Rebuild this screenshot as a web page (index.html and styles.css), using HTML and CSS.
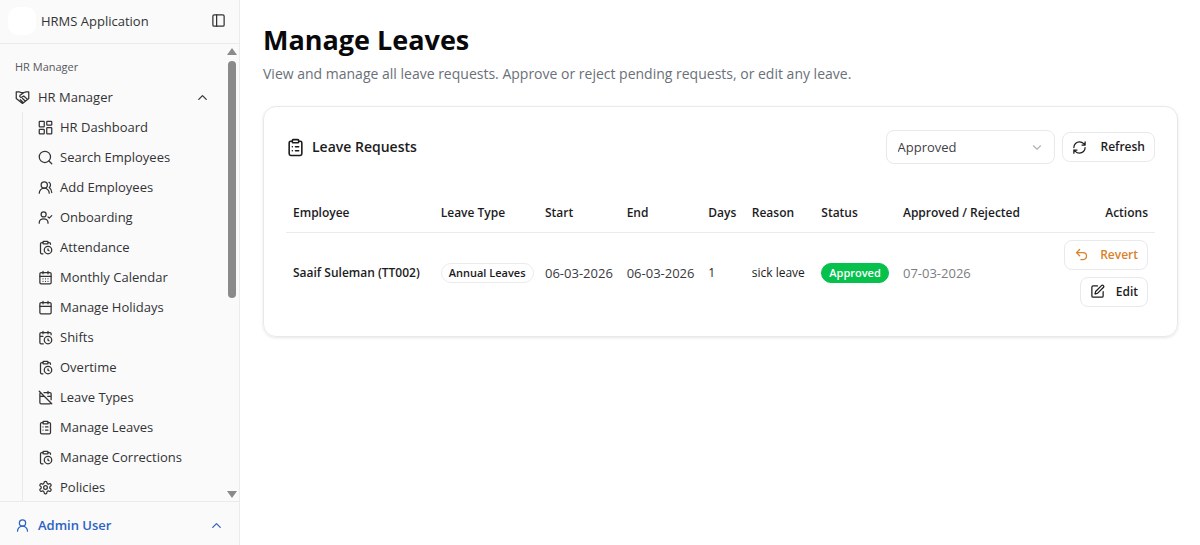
FILE: index.html
```html
<!DOCTYPE html>
<html lang="en">
<head>
<meta charset="utf-8">
<meta name="viewport" content="width=device-width, initial-scale=1">
<title>Manage Leaves</title>
<link rel="stylesheet" href="styles.css">
</head>
<body>
<svg class="sprite" aria-hidden="true">
  <symbol id="i-clipclock" viewBox="0 0 24 24"><path d="M16 14v2.2l1.6 1M16 4h2a2 2 0 0 1 2 2v.832M8 4H6a2 2 0 0 0-2 2v14a2 2 0 0 0 2 2h2"/><circle cx="16" cy="16" r="6"/><rect x="8" y="2" width="8" height="4" rx="1"/></symbol>
  <symbol id="i-cliplist" viewBox="0 0 24 24"><rect x="8" y="2" width="8" height="4" rx="1"/><path d="M16 4h2a2 2 0 0 1 2 2v14a2 2 0 0 1-2 2H6a2 2 0 0 1-2-2V6a2 2 0 0 1 2-2h2M12 11h4M12 16h4M8 11h.01M8 16h.01"/></symbol>
</svg>
<div class="app">
  <aside class="sidebar">
    <header class="brand">
      <span class="logo"></span>
      <span class="brand-name">HRMS Application</span>
      <button class="plain" type="button" aria-label="Toggle sidebar"><svg class="icon" viewBox="0 0 24 24"><rect x="3" y="3" width="18" height="18" rx="2"/><path d="M9 3v18"/></svg></button>
    </header>
    <div class="scroll">
      <nav class="nav">
        <p class="group-label">HR Manager</p>
        <button class="group" type="button" aria-expanded="true">
          <svg class="icon" viewBox="0 0 24 24"><path d="M2 3h4.500l3 1h5l3-1H22v10.500L12 21.500 2 13.500zM14 4.500L8 8.500a2 2 0 0 0 2.500 3L14 9.500l6 5.500M12 13.500l4.500 4M8.500 15.500l4 4"/></svg>
          <span>HR Manager</span>
          <svg class="icon chev" viewBox="0 0 24 24"><path d="m18 15-6-6-6 6"/></svg>
        </button>
        <ul class="menu">
          <li><a href="#"><svg class="icon" viewBox="0 0 24 24"><rect x="2" y="2" width="8" height="9" rx="1"/><rect x="14" y="2" width="8" height="6" rx="1"/><rect x="14" y="12" width="8" height="10" rx="1"/><rect x="2" y="15" width="8" height="7" rx="1"/></svg>HR Dashboard</a></li>
          <li><a href="#"><svg class="icon" viewBox="0 0 24 24"><circle cx="11" cy="11" r="9"/><path d="m22 22-4.500-4.500"/></svg>Search Employees</a></li>
          <li><a href="#"><svg class="icon" viewBox="0 0 24 24"><path d="M18 21a8 8 0 0 0-16 0M22 20c0-3.370-2-6.500-4-8a5 5 0 0 0-.45-8.300"/><circle cx="10" cy="8" r="5"/></svg>Add Employees</a></li>
          <li><a href="#"><svg class="icon" viewBox="0 0 24 24"><path d="M2 21v-1a7 6 0 0 1 14 0v1M16 11l2 2 4-4"/><circle cx="9" cy="7" r="4"/></svg>Onboarding</a></li>
          <li><a href="#"><svg class="icon" viewBox="0 0 24 24"><use href="#i-clipclock"/></svg>Attendance</a></li>
          <li><a href="#"><svg class="icon" viewBox="0 0 24 24"><rect x="3" y="4" width="18" height="18" rx="2"/><path d="M8 2v4M16 2v4M3 10h18M8 14h.01M12 14h.01M16 14h.01M8 18h.01M12 18h.01M16 18h.01"/></svg>Monthly Calendar</a></li>
          <li><a href="#"><svg class="icon" viewBox="0 0 24 24"><rect x="3" y="4" width="18" height="18" rx="2"/><path d="M8 2v4M16 2v4M3 10h18"/></svg>Manage Holidays</a></li>
          <li><a href="#"><svg class="icon" viewBox="0 0 24 24"><path d="M16 14v2.200l1.600 1M16 2v4M21 7.500V6a2 2 0 0 0-2-2H5a2 2 0 0 0-2 2v14a2 2 0 0 0 2 2h3.500M3 10h5M8 2v4"/><circle cx="16" cy="16" r="6"/></svg>Shifts</a></li>
          <li><a href="#"><svg class="icon" viewBox="0 0 24 24"><use href="#i-clipclock"/></svg>Overtime</a></li>
          <li><a href="#"><svg class="icon" viewBox="0 0 24 24"><path d="M4.200 4.200A2 2 0 0 0 3 6v14a2 2 0 0 0 2 2h14a2 2 0 0 0 1.820-1.180M21 15.500V6a2 2 0 0 0-2-2H9.500M16 2v4M3 10h7M21 10h-5.500M2 2l20 20"/></svg>Leave Types</a></li>
          <li><a href="#"><svg class="icon" viewBox="0 0 24 24"><use href="#i-cliplist"/></svg>Manage Leaves</a></li>
          <li><a href="#"><svg class="icon" viewBox="0 0 24 24"><use href="#i-clipclock"/></svg>Manage Corrections</a></li>
          <li><a href="#"><svg class="icon" viewBox="0 0 24 24"><path d="M12.220 2h-.44a2 2 0 0 0-2 2v.18a2 2 0 0 1-1 1.730l-.43.25a2 2 0 0 1-2 0l-.15-.08a2 2 0 0 0-2.730.73l-.22.38a2 2 0 0 0 .73 2.730l.15.1a2 2 0 0 1 1 1.720v.51a2 2 0 0 1-1 1.740l-.15.09a2 2 0 0 0-.73 2.730l.22.38a2 2 0 0 0 2.730.73l.15-.08a2 2 0 0 1 2 0l.43.25a2 2 0 0 1 1 1.730V20a2 2 0 0 0 2 2h.44a2 2 0 0 0 2-2v-.18a2 2 0 0 1 1-1.730l.43-.25a2 2 0 0 1 2 0l.15.08a2 2 0 0 0 2.730-.73l.22-.39a2 2 0 0 0-.73-2.730l-.15-.08a2 2 0 0 1-1-1.740v-.5a2 2 0 0 1 1-1.740l.15-.09a2 2 0 0 0 .73-2.730l-.22-.38a2 2 0 0 0-2.730-.73l-.15.08a2 2 0 0 1-2 0l-.43-.25a2 2 0 0 1-1-1.730V4a2 2 0 0 0-2-2z"/><circle cx="12" cy="12" r="3"/></svg>Policies</a></li>
        </ul>
      </nav>
      <div class="track" aria-hidden="true">
        <span class="arrow up"></span>
        <span class="rail"><span class="thumb"></span></span>
        <span class="arrow down"></span>
      </div>
    </div>
    <button class="account" type="button">
      <svg class="icon" viewBox="0 0 24 24"><circle cx="12" cy="8" r="5"/><path d="M20 21a8 8 0 0 0-16 0"/></svg>
      <span>Admin User</span>
      <svg class="icon chev" viewBox="0 0 24 24"><path d="m18 15-6-6-6 6"/></svg>
    </button>
  </aside>
  <main class="main">
    <h1>Manage Leaves</h1>
    <p class="lead">View and manage all leave requests. Approve or reject pending requests, or edit any leave.</p>
    <section class="card">
      <header class="card-head">
        <svg class="icon large" viewBox="0 0 24 24"><use href="#i-cliplist"/></svg>
        <h2>Leave Requests</h2>
        <div class="filter">
          <select aria-label="Status filter"><option>Approved</option><option>Pending</option><option>Rejected</option></select>
          <svg class="icon" viewBox="0 0 24 24"><path d="m6 9 6 6 6-6"/></svg>
        </div>
        <button class="btn refresh" type="button"><svg class="icon" viewBox="0 0 24 24"><path d="M3 12a9 9 0 0 1 9-9 9.750 9.750 0 0 1 6.740 2.740L21 8M21 3v5h-5M21 12a9 9 0 0 1-9 9 9.750 9.750 0 0 1-6.740-2.740L3 16M8 16H3v5"/></svg>Refresh</button>
      </header>
      <table class="leaves">
        <colgroup><col class="c-name"><col class="c-type"><col class="c-date"><col class="c-date"><col class="c-days"><col class="c-reason"><col class="c-status"><col class="c-decided"><col></colgroup>
        <thead><tr><th>Employee</th><th>Leave Type</th><th>Start</th><th>End</th><th>Days</th><th>Reason</th><th>Status</th><th>Approved / Rejected</th><th class="right">Actions</th></tr></thead>
        <tbody><tr>
          <td class="name">Saaif Suleman (TT002)</td>
          <td><span class="badge">Annual Leaves</span></td>
          <td class="date">06-03-2026</td><td class="date">06-03-2026</td><td>1</td><td>sick leave</td>
          <td><span class="badge green">Approved</span></td>
          <td class="date muted">07-03-2026</td>
          <td><div class="actions">
            <button class="btn orange" type="button"><svg class="icon" viewBox="0 0 24 24"><path d="M9 14 4 9l5-5M4 9h10.500a5.500 5.500 0 0 1 0 11H11"/></svg>Revert</button>
            <button class="btn" type="button"><svg class="icon" viewBox="0 0 24 24"><path d="M12 3H5a2 2 0 0 0-2 2v14a2 2 0 0 0 2 2h14a2 2 0 0 0 2-2v-7M18.375 2.625a1 1 0 0 1 3 3l-9.013 9.014a2 2 0 0 1-.853.505l-2.873.84a.5.5 0 0 1-.62-.62l.84-2.873a2 2 0 0 1 .506-.852z"/></svg>Edit</button>
          </div></td>
        </tr></tbody>
      </table>
    </section>
  </main>
</div>
</body>
</html>
```
FILE: styles.css
```css
* { box-sizing: border-box; }
body { margin: 0; font-family: "Open Sans", "Noto Sans", sans-serif; font-size: 13px; line-height: 20px; color: #1c1c1e; background: #fff; }
button, select { font: inherit; color: inherit; }
button { cursor: pointer; }
h1, h2, p, ul { margin: 0; padding: 0; }
.sprite { display: none; }
.icon { width: 15px; height: 15px; flex: none; fill: none; stroke: currentColor; stroke-width: 2; stroke-linecap: round; stroke-linejoin: round; }
.large { width: 19px; height: 19px; }

.app { display: flex; height: 100vh; }
.sidebar { width: 240px; flex: none; display: flex; flex-direction: column; background: #fafafa; border-right: 1px solid #ebebec; color: #333336; }
.brand { display: flex; align-items: center; height: 44px; padding: 0 13px 2px 8px; border-bottom: 1px solid #ebebec; }
.logo { width: 28px; height: 28px; border-radius: 10px; background: #fff; margin-right: 5px; }
.brand-name { flex: 1; }
.plain { display: flex; padding: 0; border: 0; background: none; }
.scroll { flex: 1; min-height: 0; display: flex; }
.nav { flex: 1; overflow: hidden; padding: 8px 8px 0; }
.group-label { padding: 4px 7px 0; height: 30px; font-size: 11px; line-height: 22px; color: #58585c; }
.group { display: flex; align-items: center; gap: 8px; width: 100%; height: 30px; padding: 0 6px 0 7px; border: 0; background: none; text-align: left; }
.group span, .account span { flex: 1; }
.menu { list-style: none; margin-left: 14px; border-left: 1px solid #e9e9eb; }
.menu a { display: flex; align-items: center; gap: 7px; height: 30px; padding-left: 15px; color: inherit; text-decoration: none; }
.track { width: 15px; display: flex; flex-direction: column; align-items: center; padding: 4px 0 3px; }
.arrow { border: 5px solid transparent; }
.up { border-top: 0; border-bottom: 7px solid #8a8a8a; }
.down { border-bottom: 0; border-top: 7px solid #8a8a8a; }
.rail { flex: 1; width: 8px; padding: 6px 0; }
.thumb { display: block; height: 56%; border-radius: 4px; background: #8a8a8a; }
.account { display: flex; align-items: center; gap: 8px; height: 44px; padding: 3px 15px 0; border: 0; border-top: 1px solid #ebebec; background: none; color: #2b62c4; font-weight: 600; text-align: left; }

.main { flex: 1; min-width: 0; padding: 22px 22px 22px 23px; }
h1 { font-size: 27px; line-height: 36px; font-weight: 700; color: #09090b; }
.lead { padding-top: 5px; font-size: 14px; line-height: 22px; color: #6a7078; }
.card { margin-top: 21px; padding: 23px 22px 22px; border: 1px solid #e9e9eb; border-radius: 13px; box-shadow: 0 1px 3px rgba(0, 0, 0, 0.1); }
.card-head { display: flex; align-items: center; gap: 7px; }
h2 { flex: 1; font-size: 14px; line-height: 20px; font-weight: 600; }
.filter { display: grid; align-items: center; width: 169px; color: #3f3f46; }
.filter > * { grid-area: 1 / 1; }
.filter select { appearance: none; height: 34px; padding: 0 11px; border: 1px solid #e9e9eb; border-radius: 8px; background: #fff; }
.filter .icon { justify-self: end; margin-right: 11px; color: #b4b4b8; width: 14px; pointer-events: none; }
.btn { display: flex; align-items: center; gap: 11px; height: 30px; padding: 0 9px; border: 1px solid #e9e9eb; border-radius: 8px; background: #fff; font-weight: 600; }
.refresh { gap: 14px; font-size: 12px; }
.orange { color: #d9822b; }

.leaves { width: 100%; margin-top: 30px; table-layout: fixed; border-collapse: collapse; }
.leaves th, .leaves td { padding: 7px; text-align: left; white-space: nowrap; font-size: 12px; }
.leaves th { height: 38px; font-weight: 600; border-bottom: 1px solid #ebebec; }
.leaves .right { text-align: right; }
.leaves .name { font-weight: 600; }
.leaves .date { font-size: 13px; color: #3a3a3e; }
.leaves .muted { color: #7d7d82; }
.c-name { width: 17%; }
.c-type { width: 12%; }
.c-date { width: 9.4%; }
.c-days { width: 5%; }
.c-reason { width: 8%; }
.c-status { width: 9.4%; }
.c-decided { width: 17%; }
.badge { display: inline-block; padding: 0 7px; border: 1px solid #ebebec; border-radius: 10px; font-size: 11px; line-height: 18px; font-weight: 600; }
.green { background: #06c14c; border-color: #06c14c; color: #fff; }
.actions { display: flex; flex-direction: column; align-items: flex-end; gap: 7px; }
```
